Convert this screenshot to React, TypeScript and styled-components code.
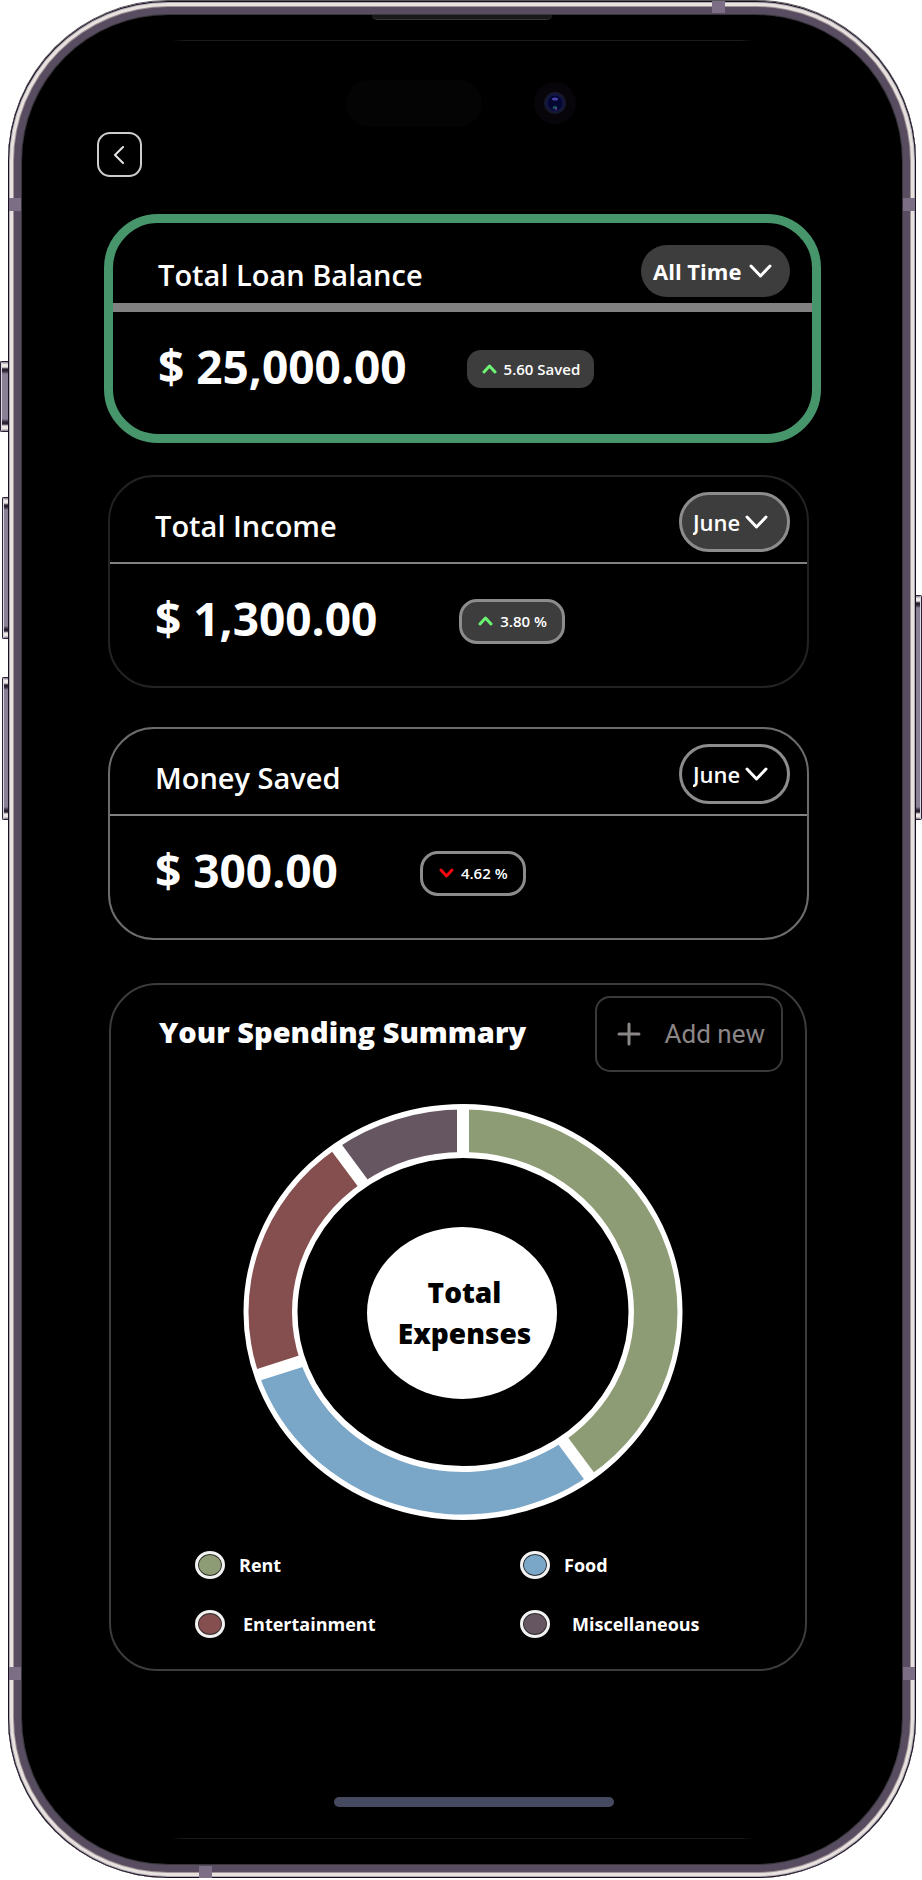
import React from "react";
import styled, { createGlobalStyle } from "styled-components";

const GlobalStyle = createGlobalStyle`
  *, *::before, *::after { box-sizing: border-box; }
  body {
    margin: 0;
    background: #fff;
    color: #fff;
    font-family: "Open Sans", "Noto Sans", sans-serif;
  }
  h1, h2, p, ul { margin: 0; padding: 0; }
  button, select { font-family: inherit; }
`;

/* ---------- Phone shell ---------- */

const Page = styled.div`
  position: relative;
  display: flex;
  min-height: 100vh;
  padding: 1px 6px 2px 8px;
`;

const Device = styled.div`
  position: relative;
  display: flex;
  flex: 1;
  min-width: 0;
  padding: 14px;
  border-radius: 160px;
  background: #574c60;
  box-shadow:
    0 -1px 0 #58585c,
    inset 0 0 0 1px #17101f,
    inset 0 0 0 2px #b3a8b4,
    inset 0 0 0 5px #e6e2de,
    inset 0 0 0 6px #a39499,
    inset 0 0 0 13px #574c60,
    inset 0 0 0 14px #38363c;
`;

const Screen = styled.div`
  position: relative;
  display: flex;
  flex: 1;
  flex-direction: column;
  min-width: 0;
  padding: 117px 81px 57px 82px;
  border-radius: 146px;
  background: #000;
`;

const SideButton = styled.span<{ $side: "left" | "right"; $top: number; $height: number; $width: number }>`
  position: absolute;
  top: ${(p) => p.$top}px;
  ${(p) => (p.$side === "left" ? `left: ${8 - p.$width}px;` : "right: 0;")}
  width: ${(p) => p.$width}px;
  height: ${(p) => p.$height}px;
  border: 1px solid #2a2133;
  border-${(p) => (p.$side === "left" ? "right" : "left")}: 0;
  border-radius: ${(p) => (p.$side === "left" ? "2px 0 0 2px" : "0 2px 2px 0")};
  background: linear-gradient(
    #9a8fa0 0 1px,
    #ece8e6 2px 5px,
    #2a2133 7px 9px,
    #8a8095 12px calc(100% - 12px),
    #2a2133 calc(100% - 9px) calc(100% - 7px),
    #ece8e6 calc(100% - 5px) calc(100% - 2px),
    #9a8fa0 calc(100% - 1px)
  );
  box-shadow: inset ${(p) => (p.$side === "left" ? "1px" : "-1px")} 0 0 #dcd8e4;
`;

const AntennaBand = styled.span<{ $edge: "left" | "right" | "top" | "bottom"; $at: string }>`
  position: absolute;
  background: #7b6e85;
  ${(p) =>
    p.$edge === "left" || p.$edge === "right"
      ? `${p.$edge}: 1px; ${p.$at}; width: 12px; height: 13px;`
      : `${p.$edge}: 0; ${p.$at}; width: 13px; height: 12px;`}
`;

const Earpiece = styled.span`
  position: absolute;
  top: 0;
  left: 50%;
  width: 180px;
  height: 5px;
  margin-left: -90px;
  border-bottom: 1px solid #353535;
  border-radius: 0 0 5px 5px;
  background: #191919;
`;

const GlassEdge = styled.span<{ $edge: "top" | "bottom" }>`
  position: absolute;
  ${(p) => p.$edge}: 25px;
  left: 150px;
  right: 150px;
  height: 1px;
  background: linear-gradient(90deg, #000, #1b1b1b 2% 98%, #000);
`;

const SensorPill = styled.span`
  position: absolute;
  top: 65px;
  left: 50%;
  width: 136px;
  height: 47px;
  margin-left: -116px;
  border-radius: 24px;
  background: #040404;
`;

const Camera = styled.svg`
  position: absolute;
  top: 67px;
  left: 50%;
  width: 42px;
  height: 42px;
  margin-left: 72px;
`;

const HomeBar = styled.div`
  align-self: center;
  width: 280px;
  height: 10px;
  margin: 126px 0 0 22px;
  border-radius: 5px;
  background: #454a60;
`;

/* ---------- Controls ---------- */

const BackButton = styled.button`
  display: grid;
  place-items: center;
  width: 45px;
  height: 45px;
  margin-left: -7px;
  padding: 0 2px 0 0;
  border: 2px solid #cdcdcd;
  border-radius: 13px;
  background: #000;
  color: #e4e4e4;
  cursor: pointer;
`;

const Period = styled.label<{ $filled: boolean; $outlined: boolean }>`
  position: relative;
  display: flex;
  flex: none;
  align-items: center;
  height: ${(p) => (p.$outlined ? 60 : 52)}px;
  padding-left: ${(p) => (p.$outlined ? 11 : 12)}px;
  border: ${(p) => (p.$outlined ? "3px solid #8c8c8c" : "0")};
  border-radius: 30px;
  background: ${(p) => (p.$filled ? "#3d3d3d" : "#000")};

  svg {
    position: absolute;
    right: ${(p) => (p.$outlined ? 19 : 18)}px;
    pointer-events: none;
  }
`;

const PeriodSelect = styled.select<{ $width: number }>`
  appearance: none;
  width: ${(p) => p.$width}px;
  height: 40px;
  padding: 0;
  border: 0;
  outline: 0;
  background: transparent;
  color: #fff;
  font-size: 22px;
  font-weight: ${(p) => (p.$width > 100 ? 700 : 600)};
  line-height: 40px;
  cursor: pointer;

  option { background: #222; }
`;

const AddButton = styled.button`
  display: flex;
  flex: none;
  align-items: center;
  gap: 24px;
  height: 76px;
  padding: 0 16px 0 20px;
  border: 2px solid #3a3a3a;
  border-radius: 15px;
  background: #000;
  color: #8b8686;
  font-family: Roboto, sans-serif;
  font-size: 26px;
  cursor: pointer;
`;

/* ---------- Cards ---------- */

type Tone = "accent" | "dim" | "plain";
const toneColor: Record<Tone, string> = { accent: "#47956b", dim: "#222", plain: "#6c6c6c" };

const Stack = styled.main`
  display: flex;
  flex-direction: column;
  margin-top: 37px;
`;

const Card = styled.section<{ $tone: Tone }>`
  margin: ${(p) => (p.$tone === "accent" ? "0 0 32px" : "0 12px 39px 4px")};
  border: ${(p) => (p.$tone === "accent" ? 9 : 2)}px solid ${(p) => toneColor[p.$tone]};
  border-radius: ${(p) => (p.$tone === "accent" ? 54 : 46)}px;
`;

const CardHead = styled.header<{ $thick: boolean }>`
  display: flex;
  align-items: center;
  justify-content: space-between;
  padding: ${(p) => (p.$thick ? "22px 22px 6px 45px" : "15px 17px 10px 45px")};
  border-bottom: ${(p) => (p.$thick ? 9 : 2)}px solid #818181;
`;

const CardTitle = styled.h2`
  padding-top: 7px;
  font-size: 29px;
  font-weight: 600;
  line-height: 40px;
  white-space: nowrap;
`;

const CardBody = styled.div<{ $gap: number }>`
  display: flex;
  align-items: center;
  gap: ${(p) => p.$gap}px;
  height: 122px;
  padding: 0 45px 8px;
`;

const Amount = styled.p`
  padding-bottom: 6px;
  font-size: 46px;
  font-weight: 700;
  line-height: 58px;
  white-space: nowrap;
`;

const Badge = styled.span<{ $filled: boolean; $outlined: boolean }>`
  display: flex;
  align-items: center;
  gap: 7px;
  height: ${(p) => (p.$outlined ? 45 : 38)}px;
  padding: ${(p) => (p.$outlined ? "0 15px 0 16px" : "0 14px 0 15px")};
  border: ${(p) => (p.$outlined ? "3px solid #8c8c8c" : "0")};
  border-radius: ${(p) => (p.$outlined ? 18 : 14)}px;
  background: ${(p) => (p.$filled ? "#3d3d3d" : "#000")};
  font-size: 15px;
  font-weight: 600;
  white-space: nowrap;
`;

/* ---------- Spending summary ---------- */

const Summary = styled.section`
  margin: 4px 14px 0 5px;
  padding: 11px 22px 31px 48px;
  border: 2px solid #3c3c3c;
  border-radius: 48px;
`;

const SummaryHead = styled.header`
  display: flex;
  align-items: center;
  justify-content: space-between;
`;

const SummaryTitle = styled.h2`
  padding-bottom: 4px;
  font-size: 29px;
  font-weight: 800;
  line-height: 40px;
  white-space: nowrap;
`;

const ChartArea = styled.div`
  display: grid;
  place-items: center;
  margin: 32px 0 31px;
  padding-right: 17px;

  > * { grid-area: 1 / 1; }
`;

const ChartCaption = styled.p`
  padding: 2px 0 0 4px;
  color: #000;
  font-size: 28px;
  font-weight: 800;
  line-height: 41px;
  text-align: center;
`;

const Legend = styled.ul`
  display: grid;
  grid-template-columns: 325px 1fr;
  row-gap: 31px;
  padding-left: 36px;
  list-style: none;
`;

const LegendItem = styled.li<{ $gap: number }>`
  display: flex;
  align-items: center;
  gap: ${(p) => p.$gap}px;
  height: 28px;
  font-size: 18px;
  font-weight: 700;
  white-space: nowrap;
`;

const Dot = styled.span<{ $color: string }>`
  width: 30px;
  height: 28px;
  border: 3px solid #f2f2f2;
  border-radius: 50%;
  background: ${(p) => p.$color};
  box-shadow: inset 0 0 0 1px #2e2e2e;
`;

/* ---------- Data ---------- */

interface Balance {
  title: string;
  amount: string;
  period: string;
  options: string[];
  change: string;
  rising: boolean;
  tone: Tone;
  gap: number;
}

const balances: Balance[] = [
  { title: "Total Loan Balance", amount: "$ 25,000.00", period: "All Time", options: ["All Time", "June"], change: "5.60 Saved", rising: true, tone: "accent", gap: 60 },
  { title: "Total Income", amount: "$ 1,300.00", period: "June", options: ["June", "May"], change: "3.80 %", rising: true, tone: "dim", gap: 82 },
  { title: "Money Saved", amount: "$ 300.00", period: "June", options: ["June", "May"], change: "4.62 %", rising: false, tone: "plain", gap: 82 },
];

const spending = [
  { label: "Rent", share: 40, color: "#8d9c74", gap: 14 },
  { label: "Food", share: 30, color: "#7aa6c8", gap: 14 },
  { label: "Entertainment", share: 20, color: "#864f4f", gap: 18 },
  { label: "Miscellaneous", share: 10, color: "#665661", gap: 22 },
];

/* ---------- Drawings ---------- */

const CX = 220;
const CY = 208;

function at(percent: number, rx: number, ry: number) {
  const a = (percent / 100) * Math.PI * 2;
  return [CX + Math.sin(a) * rx, CY - Math.cos(a) * ry];
}

function Donut() {
  let total = 0;
  const slices = spending.map((s) => {
    const start = total;
    total += s.share;
    return { ...s, start, end: total };
  });
  return (
    <svg width="440" height="416" viewBox="0 0 440 416" role="img" aria-label="Spending by category">
      <ellipse cx={CX} cy={CY} rx="192.5" ry="181" fill="none" stroke="#fff" strokeWidth="54" />
      {slices.map((s) => {
        const [x1, y1] = at(s.start, 214.5, 202.5);
        const [x2, y2] = at(s.end, 214.5, 202.5);
        const [x3, y3] = at(s.end, 171, 160);
        const [x4, y4] = at(s.start, 171, 160);
        return (
          <path
            key={s.label}
            fill={s.color}
            d={`M${x1} ${y1}A214.5 202.5 0 0 1 ${x2} ${y2}L${x3} ${y3}A171 160 0 0 0 ${x4} ${y4}Z`}
          />
        );
      })}
      {slices.map((s) => {
        const [x1, y1] = at(s.start, 217, 205);
        const [x2, y2] = at(s.start, 168, 157);
        return <line key={s.label} x1={x1} y1={y1} x2={x2} y2={y2} stroke="#fff" strokeWidth="12" />;
      })}
      <ellipse cx="219" cy="209" rx="95" ry="86" fill="#fff" />
    </svg>
  );
}

function Chevron({ up, width, height, color, stroke }: { up?: boolean; width: number; height: number; color: string; stroke: number }) {
  const d = up ? `M2 ${height - 2}L${width / 2} 2L${width - 2} ${height - 2}` : `M2 2L${width / 2} ${height - 2}L${width - 2} 2`;
  return (
    <svg width={width} height={height} fill="none" stroke={color} strokeWidth={stroke} strokeLinecap="round" strokeLinejoin="round" aria-hidden="true">
      <path d={d} />
    </svg>
  );
}

function BalanceCard({ title, amount, period, options, change, rising, tone, gap }: Balance) {
  const outlined = tone !== "accent";
  const filled = tone !== "plain";
  return (
    <Card $tone={tone}>
      <CardHead $thick={!outlined}>
        <CardTitle>{title}</CardTitle>
        <Period $filled={filled} $outlined={outlined}>
          <PeriodSelect $width={outlined ? 94 : 137} defaultValue={period} aria-label={`${title} period`}>
            {options.map((o) => (
              <option key={o}>{o}</option>
            ))}
          </PeriodSelect>
          <Chevron width={23} height={14} color="#fff" stroke={3} />
        </Period>
      </CardHead>
      <CardBody $gap={gap}>
        <Amount>{amount}</Amount>
        <Badge $filled={filled} $outlined={outlined}>
          <Chevron up={rising} width={15} height={10} color={rising ? "#6cf573" : "#f5080d"} stroke={3} />
          {change}
        </Badge>
      </CardBody>
    </Card>
  );
}

export default function App() {
  return (
    <>
      <GlobalStyle />
      <Page>
        <SideButton $side="left" $top={361} $height={71} $width={8} />
        <SideButton $side="left" $top={497} $height={142} $width={6} />
        <SideButton $side="left" $top={677} $height={143} $width={6} />
        <SideButton $side="right" $top={595} $height={225} $width={6} />
        <Device>
          <AntennaBand $edge="left" $at="top: 197px" />
          <AntennaBand $edge="right" $at="top: 197px" />
          <AntennaBand $edge="left" $at="bottom: 198px" />
          <AntennaBand $edge="right" $at="bottom: 198px" />
          <AntennaBand $edge="top" $at="right: 191px" />
          <AntennaBand $edge="bottom" $at="left: 191px" />
          <Screen>
            <Earpiece />
            <GlassEdge $edge="top" />
            <GlassEdge $edge="bottom" />
            <SensorPill />
            <Camera viewBox="0 0 42 42" aria-hidden="true">
              <circle cx="21" cy="21" r="21" fill="#08050a" />
              <circle cx="21" cy="21" r="11" fill="#15182c" />
              <circle cx="21" cy="21" r="8" fill="#060730" stroke="#14175a" />
              <ellipse cx="21" cy="17" rx="3" ry="1.5" fill="#4844a8" />
              <ellipse cx="21" cy="25.5" rx="2.5" ry="1.5" fill="#175663" />
              <circle cx="22" cy="27" r="1" fill="#743a8c" />
            </Camera>
            <BackButton aria-label="Back">
              <svg width="12" height="18" fill="none" stroke="currentColor" strokeWidth="2" strokeLinecap="round" strokeLinejoin="round" aria-hidden="true">
                <path d="M10 1L2 9L10 17" />
              </svg>
            </BackButton>
            <Stack>
              {balances.map((b) => (
                <BalanceCard key={b.title} {...b} />
              ))}
              <Summary>
                <SummaryHead>
                  <SummaryTitle>Your Spending Summary</SummaryTitle>
                  <AddButton>
                    <svg width="24" height="24" stroke="currentColor" strokeWidth="3" strokeLinecap="round" aria-hidden="true">
                      <path d="M12 2V22M2 12H22" />
                    </svg>
                    Add new
                  </AddButton>
                </SummaryHead>
                <ChartArea>
                  <Donut />
                  <ChartCaption>
                    Total
                    <br />
                    Expenses
                  </ChartCaption>
                </ChartArea>
                <Legend>
                  {spending.map((s) => (
                    <LegendItem key={s.label} $gap={s.gap}>
                      <Dot $color={s.color} />
                      {s.label}
                    </LegendItem>
                  ))}
                </Legend>
              </Summary>
            </Stack>
            <HomeBar />
          </Screen>
        </Device>
      </Page>
    </>
  );
}
